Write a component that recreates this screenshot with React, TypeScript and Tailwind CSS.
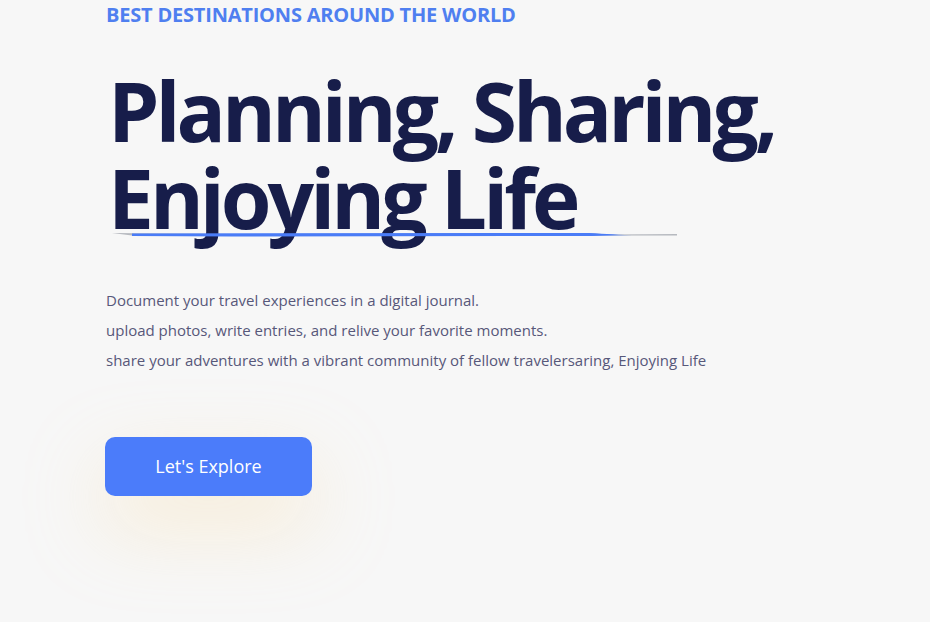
import React from "react";

export default function App() {
  return (
    <div className="w-[930px] h-[622px] bg-[#f7f7f7] overflow-hidden" style={{ fontFamily: '"Open Sans", "Noto Sans", sans-serif' }}>
      <div className="pl-[106px] pt-[3px] flex flex-col items-start">
        <div className="text-[20px] leading-[24px] font-bold text-[#4f7ff0] tracking-[-0.2px]">BEST DESTINATIONS AROUND THE WORLD</div>
        <div className="relative mt-[40px] ml-[2px]">
          <h1 className="text-[82px] leading-[87px] font-bold text-[#171d4a] tracking-[-4px]">
            Planning, Sharing,
            <br />
            Enjoying Life
          </h1>
          <svg className="absolute left-[4px] top-[162px]" width="570" height="10" viewBox="0 0 570 10">
            <path d="M0 4 L120 5 L470 4 L500 5.5 L565 5 L565 6.5 L480 6.5 L120 7 L20 6.5 Z" fill="#8a8f99" opacity="0.6" />
            <path d="M20 4.5 L470 4 C490 4 500 6 520 6 L480 7 L120 7.5 L20 7 Z" fill="#4a7cf7" />
          </svg>
        </div>
        <div className="mt-[44px] text-[15px] leading-[30px] text-[#57587a]">
          <p>Document your travel experiences in a digital journal.</p>
          <p>upload photos, write entries, and relive your favorite moments.</p>
          <p>share your adventures with a vibrant community of fellow travelersaring, Enjoying Life</p>
        </div>
        <button className="mt-[62px] -ml-[1px] w-[207px] h-[59px] rounded-[10px] bg-[#4b7cfa] text-white text-[18px] shadow-[0_30px_80px_rgba(250,215,150,0.35)]">
          Let's Explore
        </button>
      </div>
    </div>
  );
}
